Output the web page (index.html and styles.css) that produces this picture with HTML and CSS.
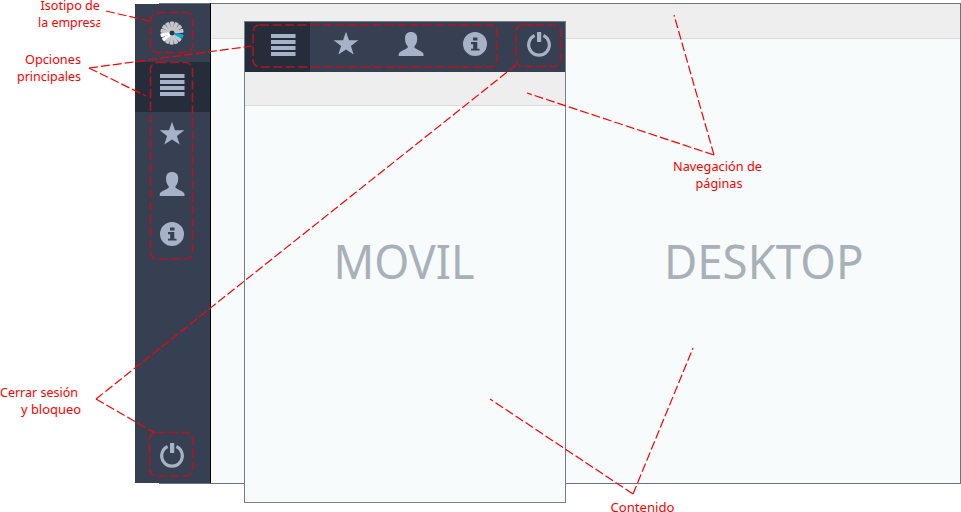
FILE: index.html
```html
<!DOCTYPE html>
<html lang="es">
<head>
<meta charset="utf-8">
<title>Estructura de la interfaz</title>
<link rel="stylesheet" href="styles.css">
</head>
<body>
<svg class="symbols" aria-hidden="true">
  <symbol id="menu" viewBox="0 0 26 26"><path d="M1 3h24.500v4H1zM1 9h24.500v4H1zM1 15h24.500v4H1zM1 21h24.500v4H1z"/></symbol>
  <symbol id="star" viewBox="0 0 26 26"><path d="M13 .8l3 8.400 9.300.1-7.400 5.600 2.800 8.700L13 18.500l-7.700 5.100 2.800-8.700L.7 9.300l9.300-.1z"/></symbol>
  <symbol id="user" viewBox="0 0 26 26"><path d="M13 1c4 0 6.200 2.300 6.200 6.500 0 3.600-1 6-2.700 7.800v1.400c1.500 1.500 8.800 3.600 9 6.300V25H.7v-2c.2-2.700 7.500-4.800 9-6.300v-1.400C8 13.500 7 11.100 7 7.500 7 3.300 9 1 13 1z"/></symbol>
  <symbol id="info" viewBox="0 0 26 26"><path fill-rule="evenodd" d="M13 1a12 12 0 1 1 0 24 12 12 0 0 1 0-24zM11 6.500v3h4.500v-3zM9 11v2.300h2.200v4.400H9V19.500h8.500v-1.800h-2.200V11z"/></symbol>
  <symbol id="power" viewBox="0 0 26 26"><path d="M8.600 4.500A10.300 10.300 0 1 0 17.400 4.500" fill="none" stroke="currentColor" stroke-width="3.200"/><path d="M11 1h4.200v10H11z"/></symbol>
</svg>

<main class="stage">
  <section class="desktop">
    <nav class="sidebar">
      <div class="brand">
        <svg class="logo" viewBox="-14 -14 28 28">
          <defs><path id="blade" d="M-1.100-2.500L-2.100-10.700l.7-.9h2.800l.7.9L1.100-2.500z"/></defs>
          <g class="logo-shadow" transform="translate(.9 .9)"><circle r="9.500"/></g>
          <g class="logo-grey">
            <use href="#blade"/><use href="#blade" transform="rotate(26)"/><use href="#blade" transform="rotate(52)"/><use href="#blade" transform="rotate(78)"/>
            <use href="#blade" transform="rotate(132)"/><use href="#blade" transform="rotate(157)"/><use href="#blade" transform="rotate(182)"/><use href="#blade" transform="rotate(207)"/>
            <use href="#blade" transform="rotate(283)"/><use href="#blade" transform="rotate(308)"/><use href="#blade" transform="rotate(334)"/>
          </g>
          <g class="logo-white"><use href="#blade" transform="rotate(232)"/><use href="#blade" transform="rotate(258)"/></g>
          <use class="logo-blue" href="#blade" transform="rotate(108)"/>
          <circle class="logo-hub" r="2.100"/>
        </svg>
      </div>
      <div class="item active"><svg class="icon"><use href="#menu"/></svg></div>
      <div class="item"><svg class="icon"><use href="#star"/></svg></div>
      <div class="item"><svg class="icon"><use href="#user"/></svg></div>
      <div class="item"><svg class="icon"><use href="#info"/></svg></div>
      <div class="item exit"><svg class="icon"><use href="#power"/></svg></div>
    </nav>
    <div class="page"><div class="pagebar"></div></div>
  </section>

  <section class="mobile">
    <nav class="tabs">
      <div class="tab active"><svg class="icon"><use href="#menu"/></svg></div>
      <div class="tab"><svg class="icon"><use href="#star"/></svg></div>
      <div class="tab"><svg class="icon"><use href="#user"/></svg></div>
      <div class="tab"><svg class="icon"><use href="#info"/></svg></div>
      <div class="tab"><svg class="icon"><use href="#power"/></svg></div>
    </nav>
    <div class="pagebar"></div>
  </section>

  <svg class="notes" viewBox="0 0 961 512">
    <defs><clipPath id="edge"><path d="M0 0h100.200v110H0z"/></clipPath></defs>
    <g class="titles">
      <text x="333.500" y="279" textLength="141" lengthAdjust="spacingAndGlyphs">MOVIL</text>
      <text x="664" y="279" textLength="199.500" lengthAdjust="spacingAndGlyphs">DESKTOP</text>
    </g>
    <g class="frames">
      <rect x="150.500" y="12.500" width="42" height="40" rx="7"/>
      <rect x="150.500" y="62.500" width="42" height="196.500" rx="7"/>
      <rect x="149.500" y="432.500" width="43.500" height="43.500" rx="7"/>
      <rect x="253" y="25" width="244" height="42" rx="7"/>
      <rect x="516" y="25" width="44.500" height="41.500" rx="7"/>
    </g>
    <g class="lines">
      <path d="M106 11L149 21"/>
      <path d="M89 68L252 46"/><path d="M89 68L146 96"/>
      <path d="M96 399L516 65"/><path d="M96 399L155 433"/>
      <path d="M714 155L674 15"/><path d="M714 155L527 93"/>
      <path d="M633 494L490 399"/><path d="M633 494L693 348"/>
    </g>
    <g class="labels">
      <g clip-path="url(#edge)">
        <text x="40.500" y="10" textLength="59.500" lengthAdjust="spacingAndGlyphs">Isotipo de</text>
        <text x="38" y="27" textLength="64.500" lengthAdjust="spacingAndGlyphs">la empresa</text>
      </g>
      <text x="25" y="64" textLength="56" lengthAdjust="spacingAndGlyphs">Opciones</text>
      <text x="17" y="81" textLength="64" lengthAdjust="spacingAndGlyphs">principales</text>
      <text x="0" y="397" textLength="78" lengthAdjust="spacingAndGlyphs">Cerrar sesión</text>
      <text x="21" y="414" textLength="60" lengthAdjust="spacingAndGlyphs">y bloqueo</text>
      <text x="673" y="171" textLength="89" lengthAdjust="spacingAndGlyphs">Navegación de</text>
      <text x="695.500" y="188" textLength="47" lengthAdjust="spacingAndGlyphs">páginas</text>
      <text x="610.500" y="511.500" textLength="64" lengthAdjust="spacingAndGlyphs">Contenido</text>
    </g>
  </svg>
</main>
</body>
</html>
```
FILE: styles.css
```css
* { box-sizing: border-box; }
body { margin: 0; background: #fff; overflow: hidden; font-family: "Noto Sans", "Open Sans", sans-serif; }
.symbols { position: absolute; width: 0; height: 0; }
.stage { position: relative; width: 961px; height: 512px; overflow: hidden; padding: 3px 0 0 135px; }

.desktop { display: flex; width: 826px; height: 481px; }
.sidebar {
  display: flex; flex-direction: column; width: 76px; height: 480px;
  padding-top: 1px; border-right: 1px solid #000;
  background: linear-gradient(90deg, #fff 24px, #6c7280 24px) top / 100% 1px no-repeat, #364052;
}
.brand { height: 58px; display: flex; align-items: center; justify-content: center; padding-right: 1px; }
.item { height: 50px; display: flex; align-items: center; justify-content: center; color: #a7b1c7; padding: 0 1px 6px 0; }
.exit { margin-top: auto; }
.active { background: #262d3a; }
.icon { width: 26px; height: 26px; fill: currentColor; }
.page { flex: 1; height: 481px; border: 1px solid #6c7280; border-left: 0; background: #f7fbfc; }
.pagebar { height: 35px; background: #eee; border-bottom: 1px solid #dadada; }
.desktop::after { content: ""; position: absolute; left: 159px; top: 483px; width: 52px; height: 1px; background: #6c7280; }

.logo { width: 28px; height: 28px; }
.logo-shadow { fill: #202735; opacity: .65; }
.logo-grey { fill: #c4c6c9; }
.logo-white { fill: #fff; }
.logo-blue { fill: #12a4dc; }
.logo-hub { fill: #2b3546; }

.mobile { position: absolute; left: 244px; top: 21px; width: 322px; height: 482px; border: 1px solid #757c8a; background: #f7fbfc; }
.tabs { display: flex; height: 50px; background: #364052; }
.tab { flex: 1 0 64px; display: flex; align-items: center; justify-content: center; color: #a7b1c7; padding: 0 0 6px 9px; }
.tab.active { flex-basis: 65px; padding-left: 11px; }
.tab:nth-child(2) { padding-left: 7px; }
.mobile .pagebar { height: 34px; }

.notes { position: absolute; left: 0; top: 0; width: 961px; height: 512px; }
.titles { font-size: 48px; fill: #a8b0b9; }
.labels { font-size: 12.5px; fill: #f00; }
.frames { fill: none; stroke: #b5141c; stroke-width: 1.6; stroke-dasharray: 9 3.500; }
.lines { fill: none; stroke: #f00; stroke-width: 1.2; stroke-dasharray: 9 3; }
```
